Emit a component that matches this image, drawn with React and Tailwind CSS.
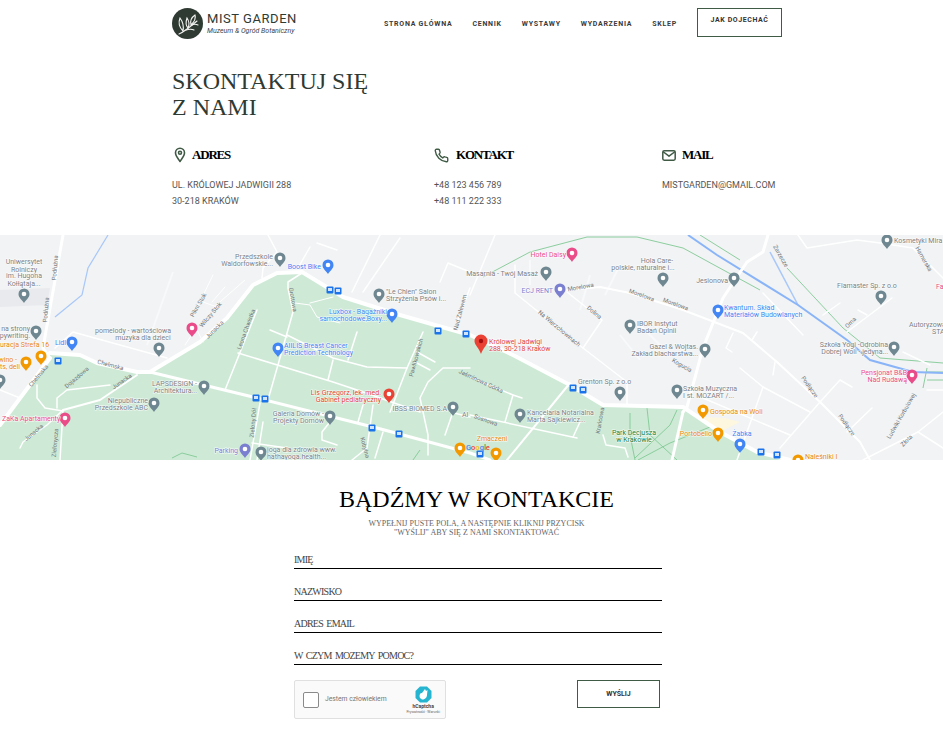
const serif = "font-['Liberation_Serif',_'Times_New_Roman',_serif]";

const roads = [
  [4, "M0 190 L50 123"],
  [3, "M63 0 L43 113 L50 123"],
  [4, "M50 118 L80 120 L97 128 L137 137 L150 137 L200 107 L227 83 L253 50 L277 38 L302 37 L343 62 L400 80 L470 100 L513 120 L570 150 L603 170 L683 172 L720 197 L757 217 L790 225"],
  [3, "M150 137 L253 162 L377 193 L470 218 L490 225"],
  [3, "M768 0 L763 17 L747 27 L723 63 L703 113 L687 172 L683 177"],
  [3, "M683 177 L672 225"],
  [1.5, "M55 113 L73 97 L167 123"],
  [2, "M63 175 L100 165 L137 140"],
  [1.5, "M57 173 L57 163 L67 155 L110 150"],
  [1.5, "M37 150 L37 163 L45 173 L63 176"],
  [1.5, "M0 155 L20 163"],
  [1.5, "M20 213 L23 207 L47 190 L63 175 L60 225"],
  [1.5, "M302 38 L288 47 L288 53 L293 77 L268 165"],
  [1.5, "M260 168 L250 225"],
  [1.5, "M257 75 L225 155"],
  [1.5, "M238 118 L333 147 L363 157 L420 177"],
  [1.5, "M270 95 L287 102"],
  [1.5, "M287 100 L333 123 L367 132 L407 133"],
  [1.5, "M333 125 L328 145"],
  [1.5, "M357 97 L348 125"],
  [1.5, "M423 97 L407 133 L390 177"],
  [1.5, "M470 133 L443 133 L428 147 L420 163 L428 200 L428 220"],
  [1.5, "M363 170 L358 187"],
  [1.5, "M373 170 L367 213 L352 225"],
  [1.5, "M333 183 L322 197 L322 205 L337 210"],
  [1, "M295 68 L310 70 L317 82 L340 88"],
  [1, "M310 68 L333 62"],
  [1.5, "M252 208 L287 213"],
  [1.5, "M263 187 L257 225"],
  [1.5, "M383 197 L375 223"],
  [1.5, "M453 177 L445 200"],
  [1.5, "M450 177 L470 182"],
  [1.5, "M417 117 L435 127"],
  [1.5, "M415 127 L430 135"],
  [1, "M213 40 L197 73"],
  [1, "M245 45 L213 73"],
  [1, "M225 52 L212 67"],
  [1, "M203 67 L217 72"],
  [1, "M197 95 L203 107"],
  [1, "M197 92 L185 110"],
  [1.5, "M262 43 L263 33 L277 17 L268 0"],
  [1.5, "M380 0 L352 57"],
  [1.5, "M400 3 L363 57"],
  [1.5, "M317 8 L337 15"],
  [1.5, "M310 12 L298 33"],
  [1.5, "M440 47 L448 28 L470 37"],
  [1.5, "M470 53 L455 93"],
  [2, "M567 55 L600 52 L630 58 L683 75 L743 98 L777 127 L820 167 L860 207 L870 225"],
  [1.5, "M567 57 L602 85 L583 113"],
  [1.5, "M515 30 L515 58 L583 113 L627 147 L627 170"],
  [1.5, "M495 0 L470 60"],
  [2, "M570 148 L507 225"],
  [1.5, "M470 142 L513 160 L522 163"],
  [1.5, "M513 160 L505 187"],
  [1.5, "M470 180 L577 203"],
  [1.5, "M580 187 L573 202"],
  [1.5, "M740 133 L763 152 L810 177"],
  [1.5, "M763 152 L737 225"],
  [1.5, "M703 163 L790 200"],
  [1.5, "M852 152 L840 145 L820 167 L780 213"],
  [1.5, "M872 173 L847 197"],
  [1.5, "M863 225 L918 197 L943 177"],
  [1.5, "M918 197 L943 213"],
  [1.5, "M847 97 L892 63"],
  [1.5, "M823 80 L840 68"],
  [1.5, "M858 75 L867 80"],
  [1.5, "M798 0 L807 13 L857 5 L880 8 L913 13 L943 43"],
  [1.5, "M763 58 L803 100"],
  [1.5, "M752 105 L757 97"],
  [1.5, "M732 117 L726 113 L733 98"],
  [1.5, "M773 140 L775 127"],
  [1.5, "M903 117 L930 130"],
  [1.5, "M927 155 L943 155"],
  [1.5, "M603 200 L606 210 L625 213 L628 222"],
];
const faint = ["M173 37 L147 110", "M590 40 L580 75", "M620 30 L605 60", "M640 90 L660 110", "M620 100 L640 125", "M530 25 L530 50"];
const greens = [
  "M483 42 L530 17 L587 2 L637 2 L683 13 L760 55",
  "M700 0 L740 25",
  "M787 33 L843 93 L880 123 L943 128",
  "M927 133 L923 153",
  "M927 145 L943 145",
  "M927 137 L943 137",
  "M647 173 L650 200 L677 225",
  "M677 175 L670 190 L635 223",
  "M630 178 L630 200 L635 225",
  "M710 192 L670 208 L638 225",
  "M172 223 L182 218 L197 222",
  "M420 215 L413 225",
];

const G = "#7c8186", B = "#4285f4", P = "#ea4c89", O = "#e8870e", V = "#7b7fd0", R = "#e0443a";
const labels = [
  [24, 29, "Uniwersytet", G, "middle"], [24, 36.5, "Rolniczy", G, "middle"], [24, 43, "im. Hugona", G, "middle"], [24, 50.5, "Kołłątaja...", G, "middle"],
  [30, 96, "na strony", G, "end"], [30, 102.5, "opywriting.", G, "end"],
  [0, 112, "uracja Strefa 16", O, "start"], [17, 127, "wino -", O, "end"], [20, 133.5, "ts, deli", O, "end"],
  [66, 110, "Lidl", B, "end"], [133, 98, "pomelody - wartościowa", G, "middle"], [143, 105, "muzyka dla dzieci", G, "middle"],
  [197, 151, "LAPSDESIGN -", G, "end"], [197, 158, "Architektura...", G, "end"],
  [148, 168, "Niepubliczne", G, "end"], [148, 175, "Przedszkole ABC", G, "end"], [2, 186, "ZaKa Apartamenty", P, "start"],
  [273, 23.5, "Przedszkole", G, "end"], [273, 31, "Waldorfowskie...", G, "end"], [321, 33.5, "Boost Bike", B, "end"],
  [386, 59, "\"Le Chien\" Salon", G, "start"], [386, 66, "Strzyżenia Psów i...", G, "start"], [387, 79, "Luxbox - Bagażniki", B, "end"], [387, 86, "samochodowe,Boxy...", B, "end"],
  [284, 113, "AIILIS Breast Cancer", B, "start"], [284, 120, "Prediction Technology", B, "start"],
  [381, 159.5, "Lis Grzegorz, lek. med.", R, "end"], [381, 167, "Gabinet pediatryczny", R, "end"],
  [447, 176, "IBSS BIOMED S.A", G, "end"], [324, 181, "Galeria Domów -", G, "end"], [324, 188, "Projekty Domów", G, "end"],
  [238, 217.5, "Parking", V, "end"], [267, 217, "joga dla zdrowia www.", G, "start"], [267, 224, "hathayoga.health...", G, "start"],
  [566, 22, "Hotel Daisy", P, "end"], [538, 40.5, "Masarnia - Twój Masaż", G, "end"], [553, 58, "ECJ RENT", V, "end"],
  [657, 28, "Hola Care-", G, "middle"], [643, 34.5, "polskie, naturalne i...", G, "middle"], [728, 48, "Jesionova", G, "end"],
  [724, 75, "Kwantum. Skład", B, "start"], [724, 82, "Materiałów Budowlanych", B, "start"],
  [637, 91, "IBOR Instytut", G, "start"], [637, 98, "Badań Opinii", G, "start"],
  [698, 114, "Gazel & Wojtas.", G, "end"], [698, 121, "Zakład blacharstwa...", G, "end"],
  [489, 108.5, "Królowej Jadwigi", R, "start"], [489, 115.5, "288, 30-218 Kraków", R, "start"],
  [578, 148.5, "Grenton Sp. z o.o", G, "start"], [683, 155.5, "Szkoła Muzyczna", G, "start"], [683, 163, "I st. MOZART /...", G, "start"],
  [527, 179.5, "Kancelaria Notarialna", G, "start"], [527, 186.5, "Marta Sajkiewicz...", G, "start"],
  [710, 179, "Gospoda na Woli", O, "start"], [712, 201, "Portobello", O, "end"], [742, 201, "Żabka", B, "middle"],
  [634, 200, "Park Decjusza", "#188038", "middle"], [634, 207, "w Krakowie", "#188038", "middle"], [492, 206, "Zmaczeni", O, "middle"],
  [894, 8, "Kosmetyki Mira", G, "start"], [867, 53, "Flamaster Sp. z o.o", G, "middle"],
  [909, 92, "Autoryzowany", G, "start"], [932, 99, "STA", G, "start"], [888, 111.5, "Szkoła Yogi -Odrobina", G, "end"], [888, 119, "Dobrej Woli - jedyna...", G, "end"],
  [907, 140, "Pensjonat B&B", P, "end"], [907, 147, "Nad Rudawą", P, "end"], [805, 224, "Naleśniki I", O, "start"], [936, 54, "Fa", P, "start"], [462, 181.5, "Al", G, "start"],
];
const roadLabels = [
  [57, 33, "Podłużna", -85], [48, 75, "Podłużna", -85], [110, 132, "Chełmska", 15], [40, 142, "Chełmska", -50], [200, 71, "Pikni Stok", -60], [212, 81, "Wilczy Stok", -50], [216, 96, "Junacka", -45],
  [78, 144, "Dojazdowa", -40], [123, 148, "Junacka", -35], [35, 199, "Junacka", -40], [57, 208, "Zielonycza", -85], [291, 65, "Grottowa", 80], [248, 95, "Leona Chwistka", -70], [255, 188, "Zielony Dół", -85],
  [418, 123, "Pawlikowskich", -75], [462, 78, "Nad Zalewem", -75], [480, 148, "Jaśminowa Górka", 25], [363, 213, "Kobylna", 75], [581, 54, "Morelowa", -10], [641, 62, "Morelowa", 20], [675, 71, "Morelowa", 20],
  [558, 95, "Na Wierzchowinach", 40], [593, 79, "Dolina", 40], [681, 132, "Kogucia", 30], [602, 186, "Krańcowa", -80], [779, 22, "Zarzecze", 60], [852, 89, "Orna", -45], [808, 153, "Podłącze", 55], [845, 191, "Podłącze", 55],
  [903, 182, "Ludwiki Korbulowej", -60], [908, 207, "Złota", -45], [485, 187, "Sosnowa", 20], [922, 25, "Hamerska", 60],
];
const GP = "#6f8790", BP = "#4285f4", PP = "#ea4c89", OP = "#f29900", VP = "#7b7fd0";
const pins = [
  [24, 59, GP], [36, 96, GP], [0, 145, GP], [159, 113, GP], [204, 151, GP], [154, 168, GP], [280, 23, GP], [379, 59, GP], [330, 181, GP], [261, 217, GP], [453, 172, GP],
  [546, 37, GP], [663, 43, GP], [734, 43, GP], [630, 90, GP], [705, 114, GP], [620, 157, GP], [677, 155, GP], [520, 179, GP], [881, 61, GP], [894, 112, GP], [887, 5, GP],
  [72, 107, BP], [328, 30, BP], [392, 79, BP], [278, 113, BP], [718, 75, BP], [740, 209, BP],
  [192, 93, PP], [65, 183, PP], [572, 18, PP], [912, 140, PP], [389, 159, "#ea4335"],
  [41, 121, OP], [26, 127, OP], [460, 213, OP], [496, 218, OP], [703, 175, OP], [718, 198, OP], [798, 225, OP],
  [245, 214, VP], [560, 54, VP],
];
const stops = [[58, 126], [330, 55], [338, 56], [438, 96], [466, 99], [256, 163], [265, 164], [372, 193], [399, 199], [573, 153], [583, 155], [480, 219], [761, 217], [777, 220]];

function MapArt() {
  return (
    <svg width="943" height="225" viewBox="0 0 943 225" className="block w-full h-full">
      <rect width="943" height="225" fill="#f1f3f4" />
      <path d="M0 55 L50 53 L47 70 L0 72 Z" fill="#e8eaed" />
      <path d="M0 190 L50 120 L80 120 L97 128 L137 137 L150 137 L200 107 L227 83 L253 50 L277 38 L302 37 L343 62 L400 80 L470 100 L513 120 L570 150 L603 170 L683 172 L720 197 L757 217 L790 225 L0 225 Z" fill="#ceead6" />
      <path d="M703 182 L725 183 L740 187 L720 197 Z" fill="#fef7e0" />
      {faint.map((d) => <path key={d} d={d} fill="none" stroke="#f8f9fa" strokeWidth="2" />)}
      <path d="M108 0 L88 33 L82 60 L55 82" fill="none" stroke="#a8c7fa" strokeWidth="1.2" />
      <path d="M770 17 L798 70" fill="none" stroke="#a8c7fa" strokeWidth="1.5" />
      {greens.map((d) => <path key={d} d={d} fill="none" stroke="#81c995" strokeWidth="0.9" />)}
      <path d="M688 0 L717 20 L798 70 L847 105 L870 125 L913 137 L943 138" fill="none" stroke="#8ab4f8" strokeWidth="2" />
      {roads.map(([w, d]) => <path key={d} d={d} fill="none" stroke="#ffffff" strokeWidth={w} strokeLinejoin="round" strokeLinecap="round" />)}
      <g fontFamily="Roboto, sans-serif" fontSize="6" fill="#70757a">
        {roadLabels.map(([x, y, t, a]) => <text key={t + x} x={x} y={y} textAnchor="middle" transform={`rotate(${a} ${x} ${y})`}>{t}</text>)}
      </g>
      {stops.map(([x, y]) => (
        <g key={x + "-" + y}>
          <rect x={x - 3.5} y={y - 3.5} width="7" height="7" rx="1" fill="#1a73e8" />
          <rect x={x - 2} y={y - 2} width="4" height="3" fill="#d2e3fc" />
        </g>
      ))}
      {pins.map(([x, y, c]) => (
        <g key={x + "-" + y}>
          <path d={`M${x} ${y + 9} C${x - 1.5} ${y + 6} ${x - 5.5} ${y + 4} ${x - 5.5} ${y} A5.5 5.5 0 1 1 ${x + 5.5} ${y} C${x + 5.5} ${y + 4} ${x + 1.5} ${y + 6} ${x} ${y + 9} Z`} fill={c} />
          <circle cx={x} cy={y} r="2.3" fill="#fff" />
        </g>
      ))}
      <g fontFamily="Roboto, sans-serif" fontSize="7">
        {labels.map(([x, y, t, c, anchor]) => <text key={t + x + y} x={x} y={y} fill={c} textAnchor={anchor} stroke="#ffffff" strokeWidth="1.2" strokeOpacity="0.8" paintOrder="stroke">{t}</text>)}
      </g>
      <path d="M481 119 C479 113 474.500 110 474.500 106 A6.500 6.500 0 1 1 487.500 106 C487.500 110 483 113 481 119 Z" fill="#ea4335" />
      <circle cx="481" cy="106" r="2.2" fill="#a50e0e" />
      <text x="466" y="215" fontFamily="Roboto, sans-serif" fontSize="7.5" fontWeight="500" textAnchor="start">
        <tspan fill="#4285f4">G</tspan><tspan fill="#ea4335">o</tspan><tspan fill="#fbbc04">o</tspan><tspan fill="#4285f4">g</tspan><tspan fill="#34a853">l</tspan><tspan fill="#ea4335">e</tspan>
      </text>
    </svg>
  );
}

function Logo() {
  return (
    <svg width="31" height="31" viewBox="0 0 31 31" className="shrink-0">
      <circle cx="15.500" cy="15.500" r="15.500" fill="#2f3a33" />
      <g fill="none" stroke="#f4f4f2" strokeWidth="1.1" strokeLinecap="round">
        <path d="M7 26 C12 24 18 19 25 13" />
        <path d="M11 23 C8 20 6 15 8 10 C11 14 12 18 11 23 Z" />
        <path d="M16 20 C13 17 14 13 15 10 C17 13 18 16 16 20 Z" />
        <path d="M19 17 C18 13 20 9 23 7 C24 10 22 14 19 17 Z" />
        <path d="M14 22 C17 21 20 21 22 22" />
        <path d="M20 17 C22 16 24 16 26 17" />
      </g>
    </svg>
  );
}

function Heading({ icon, children }) {
  return (
    <div className="flex items-center gap-[6px] h-6">
      {icon}
      <h3 className={`${serif} text-[13px] tracking-[-1.2px] font-bold text-black`}>{children}</h3>
    </div>
  );
}

const ic = { fill: "none", stroke: "#3f5a45", strokeWidth: 1.6, strokeLinecap: "round", strokeLinejoin: "round" };

function Field({ label }) {
  return (
    <div className={`${serif} h-8 flex items-end border-b border-black pb-[2px] text-[10px] tracking-[-0.75px] [word-spacing:1.5px] leading-[12px] text-[#444]`}>
      {label}
    </div>
  );
}

export default function App() {
  const nav = ["STRONA GŁÓWNA", "CENNIK", "WYSTAWY", "WYDARZENIA", "SKLEP"];
  return (
    <div className="w-[943px] h-[754px] overflow-hidden bg-white font-['Roboto',_sans-serif]">
      <header className="ml-[172px] w-[610px] h-[45px] pt-2 flex items-start">
        <div className="flex items-center gap-[4px]">
          <Logo />
          <div className="leading-none">
            <div className="text-[13px] leading-[14px] tracking-[0.55px] text-[#2f3a33]">MIST GARDEN</div>
            <div className="text-[7px] leading-[10px] italic text-[#444]">Muzeum &amp; Ogród Botaniczny</div>
          </div>
        </div>
        <nav className="ml-[87px] flex gap-5 pt-[11px] text-[7px] leading-[10px] font-bold tracking-[0.75px] text-[#3a3a3a]">
          {nav.map((n) => <span key={n}>{n}</span>)}
        </nav>
        <a className="ml-auto w-[85px] h-[29px] border border-[#3f5a45] flex items-center justify-center text-[7px] font-bold tracking-[0.6px] text-[#333] pb-1">JAK DOJECHAĆ</a>
      </header>

      <h1 className={`${serif} ml-[172px] mt-[23px] text-[24px] leading-[26px] text-[#2f3a33]`}>SKONTAKTUJ SIĘ<br />Z NAMI</h1>

      <section className="ml-[172px] w-[610px] mt-[23px] grid grid-cols-[262px_228px_120px] h-[82px]">
        <div>
          <Heading icon={<svg width="12" height="16" viewBox="0 0 12 16" {...ic} className="ml-[2px]"><path d="M6 14.500 C4 11.500 1.500 9 1.500 5.800 A4.500 4.500 0 0 1 10.500 5.800 C10.500 9 8 11.500 6 14.500 Z" /><circle cx="6" cy="5.800" r="1.500" /></svg>}>ADRES</Heading>
          <p className="mt-[10px] text-[9px] leading-[16px] text-[#555]">UL. KRÓLOWEJ JADWIGII 288<br />30-218 KRAKÓW</p>
        </div>
        <div>
          <Heading icon={<svg width="15" height="15" viewBox="0 0 24 24" {...ic} strokeWidth="2.2" className="mr-[1px]"><path d="M22 17v3a2 2 0 0 1-2.200 2A19.800 19.800 0 0 1 2 4.200 2 2 0 0 1 4 2h3a2 2 0 0 1 2 1.700c.1 1 .4 1.900.7 2.800a2 2 0 0 1-.5 2.100L8 9.900a16 16 0 0 0 6 6l1.300-1.300a2 2 0 0 1 2.100-.4c.9.3 1.800.6 2.800.7A2 2 0 0 1 22 17z" /></svg>}>KONTAKT</Heading>
          <p className="mt-[10px] text-[9px] leading-[16px] text-[#555]">+48 123 456 789<br />+48 111 222 333</p>
        </div>
        <div>
          <Heading icon={<svg width="14" height="11" viewBox="0 0 14 11" {...ic} strokeWidth="1.5"><rect x="0.800" y="0.800" width="12.400" height="9.400" rx="1.400" /><path d="M1.500 2 L7 6.200 L12.500 2" /></svg>}>MAIL</Heading>
          <p className="mt-[10px] text-[9px] leading-[16px] text-[#555]">MISTGARDEN@GMAIL.COM</p>
        </div>
      </section>

      <div className="mt-[10px] h-[225px]"><MapArt /></div>

      <section className="w-[368px] ml-[294px] pt-[24px]">
        <h2 className={`${serif} text-center text-[24px] leading-[30px] text-black -ml-[3px]`}>BĄDŹMY W KONTAKCIE</h2>
        <p className={`${serif} mt-[5px] -ml-[3px] text-center text-[8px] leading-[9px] text-[#666]`}>WYPEŁNIJ PUSTE POLA, A NASTĘPNIE KLIKNIJ PRZYCISK<br />"WYŚLIJ" ABY SIĘ Z NAMI SKONTAKTOWAĆ</p>
        <div>
          {["IMIĘ", "NAZWISKO", "ADRES EMAIL", "W CZYM MOZEMY POMOC?"].map((f) => <Field key={f} label={f} />)}
        </div>
        <div className="mt-[15px] flex items-start justify-between">
          <div className="w-[152px] h-[39px] bg-[#fafafa] border border-[#e0e0e0] rounded-[2px] flex items-center pl-[8px]">
            <span className="w-[16px] h-[16px] border border-[#8a8a8a] rounded-[2px] bg-white shrink-0" />
            <span className="ml-[6px] text-[6.75px] text-[#777] whitespace-nowrap">Jestem człowiekiem</span>
            <div className="ml-auto mr-[5px] flex flex-col items-center pt-[1px]">
              <svg width="17" height="17" viewBox="0 0 17 17">
                <path d="M5 0.500 H12 L16.500 5 V12 L12 16.500 H5 L0.500 12 V5 Z" fill="#26b5d0" />
                <path d="M5 12 C4 9 5 7 7 7 L10 3 L11 5 L12.500 4 L12 9 C12 12 9 14 7 13.500 Z" fill="#fff" />
              </svg>
              <span className="text-[5px] leading-[7px] font-bold text-[#444]">hCaptcha</span>
              <span className="text-[3.5px] leading-[5px] text-[#666] whitespace-nowrap">Prywatność · Warunki</span>
            </div>
          </div>
          <button className="w-[83px] h-[28px] mr-[2px] border border-[#3f5a45] text-[7px] font-bold text-[#333]">WYŚLIJ</button>
        </div>
      </section>
    </div>
  );
}
